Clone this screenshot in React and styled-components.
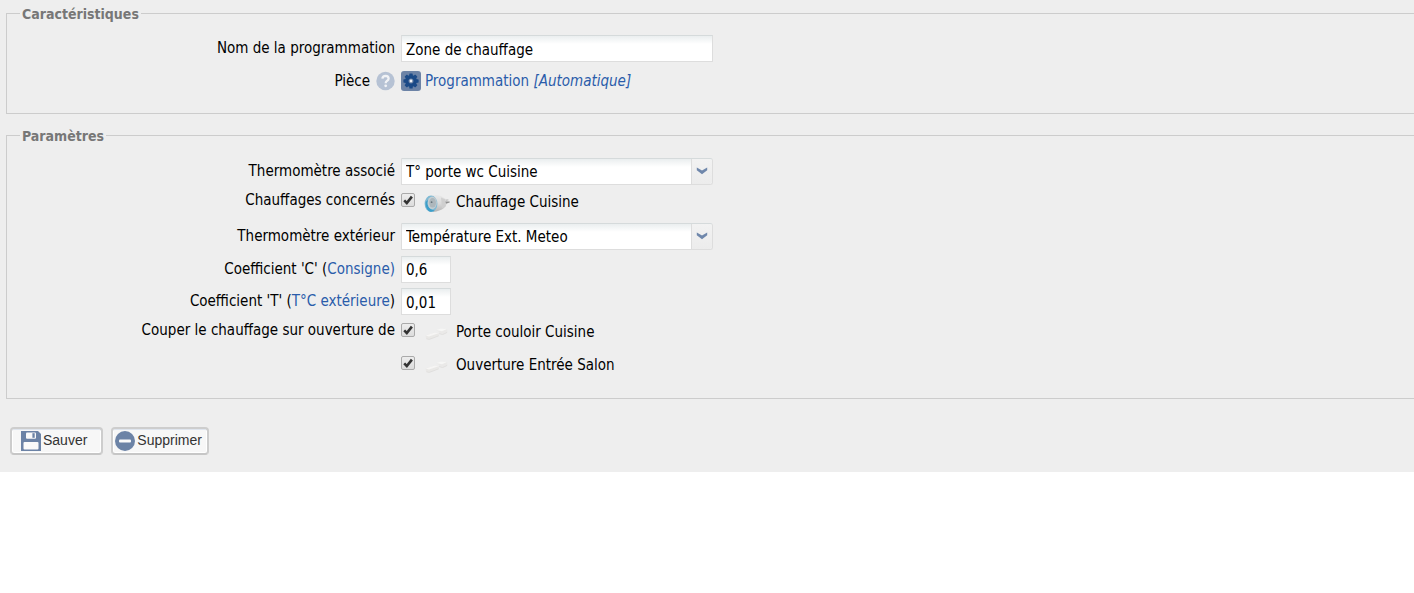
import React from "react";
import styled, { createGlobalStyle } from "styled-components";

const GlobalStyle = createGlobalStyle`
  *, *::before, *::after { box-sizing: border-box; }
  body {
    margin: 0;
    background: #fff;
    color: #000;
    font-family: Tahoma, "DejaVu Sans Condensed", "Noto Sans", sans-serif;
    font-size: 15px;
    line-height: 20px;
  }
`;

const Form = styled.form`
  background: #eee;
  padding: 4px 0 17px 6px;
`;

const Section = styled.fieldset`
  margin: 0 0 12px;
  min-width: 0;
  border: 1px solid #ccc;
  border-right: 0;
  padding: 12px 13px 18px;

  & + & {
    padding-top: 13px;
  }
`;

const Title = styled.legend`
  padding: 2px 2px 0;
  color: #777;
  font-size: 14px;
  line-height: 17px;
  font-weight: bold;
`;

const Row = styled.div`
  display: grid;
  grid-template-columns: 375px minmax(0, 1fr);
  column-gap: 6px;
  align-items: ${(p) => (p.$top ? "start" : "center")};
  min-height: ${(p) => (p.$tall ? 28 : 27)}px;

  & + & {
    margin-top: 5px;
  }
`;

const Caption = styled.div`
  display: flex;
  justify-content: flex-end;
  align-items: center;
  gap: 6px;
  padding-bottom: 1px;
  white-space: pre;
`;

const Link = styled.a`
  color: #2a5caa;
  text-decoration: none;
`;

const TextBox = styled.input`
  display: block;
  width: ${(p) => (p.$small ? 50 : 312)}px;
  max-width: 100%;
  height: 27px;
  padding: 2px 4px 0;
  border: 1px solid #ddd;
  border-top-color: #d5dadb;
  background: linear-gradient(#eaeeef, #fff 8px);
  color: #000;
  font: inherit;
  outline: 0;
`;

const SelectFrame = styled.div`
  position: relative;
  width: 312px;
  max-width: 100%;
`;

const SelectBox = styled.select`
  display: block;
  appearance: none;
  width: 100%;
  height: 27px;
  padding: 0 24px 0 4px;
  border: 1px solid #ddd;
  border-top-color: #d5dadb;
  border-radius: 0 3px 3px 0;
  background: linear-gradient(#eaeeef, #fff 8px);
  color: #000;
  font: inherit;
  outline: 0;
`;

const Arrow = styled.span`
  position: absolute;
  top: 1px;
  right: 1px;
  bottom: 1px;
  width: 21px;
  display: flex;
  justify-content: center;
  padding-top: 8px;
  border-left: 1px solid #ddd;
  border-radius: 0 2px 2px 0;
  background: linear-gradient(#f2f2f2, #ececec);
  pointer-events: none;
`;

const Value = styled.div`
  display: flex;
  align-items: center;
  gap: 4px;
  padding-bottom: 1px;

  svg {
    flex: none;
    margin-top: 1px;
  }
`;

const Option = styled.div`
  display: flex;
  align-items: flex-start;
`;

const Tick = styled.span`
  position: relative;
  width: 14px;
  height: 14px;
  margin: 3px 9px 0 0;

  svg {
    position: absolute;
    inset: 0;
    pointer-events: none;
    visibility: hidden;
  }

  input:checked + svg {
    visibility: visible;
  }
`;

const TickBox = styled.input`
  display: block;
  appearance: none;
  width: 14px;
  height: 14px;
  margin: 0;
  border: 1px solid #aaa;
  border-radius: 2px;
  background: linear-gradient(#ededed, #dcdcdc);
`;

const OptionLabel = styled.label`
  display: flex;
  align-items: center;
  gap: 6px;
  line-height: 24px;

  svg {
    margin-top: 3px;
  }
`;

const Actions = styled.div`
  display: flex;
  gap: 8px;
  padding: 16px 4px 0;
`;

const Button = styled.button`
  display: flex;
  align-items: flex-start;
  gap: 2px;
  height: 28px;
  padding: ${(p) => (p.$wide ? "2px 14px 0 9px" : "2px 5px 0 2px")};
  border: 2px solid #ccc;
  border-color: #cdcdcd #cdcdcd #c6c6c6;
  border-radius: 4px;
  background: #f7f7f7;
  box-shadow: inset 0 2px 0 -1px #dfe5ee, inset 0 0 0 1px #fff;
  color: #333;
  font-family: "Liberation Sans", Arial, sans-serif;
  font-size: 14px;
  line-height: 18px;
`;

const HelpIcon = () => (
  <svg width="19" height="20" viewBox="0 0 19 20" aria-hidden="true">
    <circle cx="9.5" cy="10" r="9.2" fill="#b6c2d4" />
    <path d="M6.4 7.6Q6.6 4.8 9.6 4.8Q12.6 4.9 12.6 7.4Q12.6 8.9 10.9 9.9Q9.7 10.7 9.7 12.2" fill="none" stroke="#f1f3f6" strokeWidth="2.3" />
    <circle cx="9.7" cy="14.8" r="1.4" fill="#f1f3f6" />
  </svg>
);

const GearIcon = () => (
  <svg width="20" height="20" viewBox="0 0 20 20" aria-hidden="true">
    <rect width="20" height="20" rx="3" fill="#6c83a6" />
    <g fill="#1b4a87">
      <circle cx="10" cy="10" r="6" />
      {[0, 45, 90, 135, 180, 225, 270, 315].map((a) => (
        <rect key={a} x="8.3" y="2.4" width="3.4" height="4" rx="0.6" transform={`rotate(${a} 10 10)`} />
      ))}
    </g>
    <circle cx="10" cy="10" r="2.5" fill="#6c83a6" />
    <circle cx="10" cy="10" r="1.4" fill="#f2f4f7" />
  </svg>
);

const PlugIcon = () => (
  <svg width="26" height="20" viewBox="0 0 26 20" aria-hidden="true">
    <defs>
      <linearGradient id="plugBody" x1="0" y1="0" x2="0" y2="1">
        <stop offset="0" stopColor="#e9e9e9" />
        <stop offset="0.5" stopColor="#dadada" />
        <stop offset="1" stopColor="#b4b4b4" />
      </linearGradient>
    </defs>
    <path d="M7 1.6Q12 0.4 17 2L21 4.4L22.4 6V11L20 14Q16 17 9 18Z" fill="url(#plugBody)" />
    <path d="M17 3.6L21.6 5.4V12.4L18 14.6Z" fill="#cfcfcf" />
    <path d="M22 5.4L24.4 5.2V6.6L22 7Z" fill="#c4c4c4" />
    <path d="M21.4 7.6L25.6 7.4V8.6L22 9.8Z" fill="#8f8f8f" />
    <ellipse cx="7" cy="9.8" rx="6.4" ry="8.2" fill="#7fb9d3" />
    <path d="M1.6 8Q1.2 14.4 5 17.2Q8 18.6 10.8 16.4Q6.4 16.2 4.2 12.6Q3.2 9.8 4 6Z" fill="#3d9fca" />
    <ellipse cx="8.2" cy="8.8" rx="4.6" ry="6.4" fill="#c3cdd2" />
    <ellipse cx="8.6" cy="8.8" rx="3.4" ry="4.8" fill="#adb7bc" />
    <circle cx="7.6" cy="8.2" r="0.9" fill="#66737b" />
  </svg>
);

const ContactIcon = () => (
  <svg width="26" height="20" viewBox="0 0 26 20" aria-hidden="true">
    <path d="M1.6 11.6L11 8.6L14.6 9.2L14.8 11.6L5.4 15.4L2.2 14.8Z" fill="#e9e8e6" />
    <path d="M1.6 11.6L11 8.6L14.6 9.2L5 12.6Z" fill="#f6f5f4" />
    <path d="M12 6L16.6 4.4L23 5L23.4 8.2L18.6 10.4L15.4 9.4L15 8Z" fill="#eae9e8" />
    <path d="M12 6L16.6 4.4L23 5L18 7.2Z" fill="#f6f6f5" />
    <path d="M2.4 14.8L5.4 15.4L14.8 11.8M15.2 9.6L18.6 10.6L23.2 8.4" fill="none" stroke="#dddcda" strokeWidth="0.8" />
  </svg>
);

const SaveIcon = () => (
  <svg width="20" height="20" viewBox="0 0 20 20" aria-hidden="true">
    <path d="M0 0H17L20 3V20H0Z" fill="#6c83a6" />
    <rect x="5" y="1.5" width="10" height="6.3" rx="1" fill="#fafafa" />
    <rect x="11.4" y="2.2" width="2.3" height="4.6" fill="#6c83a6" />
    <rect x="2.5" y="11" width="15" height="7.6" rx="1" fill="#fafafa" />
  </svg>
);

const RemoveIcon = () => (
  <svg width="20" height="20" viewBox="0 0 20 20" aria-hidden="true">
    <circle cx="10" cy="10" r="10" fill="#6c83a6" />
    <rect x="4" y="8.6" width="12" height="2.9" rx="1" fill="#fafafa" />
  </svg>
);

function Select({ id, value }) {
  return (
    <SelectFrame>
      <SelectBox id={id} defaultValue={value}>
        <option>{value}</option>
      </SelectBox>
      <Arrow>
        <svg width="12" height="8" viewBox="0 0 12 8" aria-hidden="true">
          <path d="M0.8 0.6L6 3.4L11.2 0.6V3.2L6 7.2L0.8 3.2Z" fill="#6f87ab" />
        </svg>
      </Arrow>
    </SelectFrame>
  );
}

function Choice({ id, icon, children }) {
  return (
    <Option>
      <Tick>
        <TickBox type="checkbox" id={id} defaultChecked />
        <svg width="14" height="14" viewBox="0 0 14 14" aria-hidden="true">
          <path d="M3.2 7.4L5.8 10L10.9 3.6" fill="none" stroke="#333" strokeWidth="2.6" />
        </svg>
      </Tick>
      <OptionLabel htmlFor={id}>
        {icon}
        {children}
      </OptionLabel>
    </Option>
  );
}

export default function App() {
  return (
    <>
      <GlobalStyle />
      <Form onSubmit={(e) => e.preventDefault()}>
        <Section>
          <Title>Caractéristiques</Title>
          <Row>
            <Caption><label htmlFor="nom">Nom de la programmation</label></Caption>
            <TextBox id="nom" defaultValue="Zone de chauffage" />
          </Row>
          <Row $tall>
            <Caption>
              Pièce
              <HelpIcon />
            </Caption>
            <Value>
              <GearIcon />
              <Link href="#piece">Programmation <em>[Automatique]</em></Link>
            </Value>
          </Row>
        </Section>

        <Section>
          <Title>Paramètres</Title>
          <Row>
            <Caption><label htmlFor="thermo">Thermomètre associé</label></Caption>
            <Select id="thermo" value="T° porte wc Cuisine" />
          </Row>
          <Row $top $tall>
            <Caption>Chauffages concernés</Caption>
            <Choice id="chauffage" icon={<PlugIcon />}>Chauffage Cuisine</Choice>
          </Row>
          <Row>
            <Caption><label htmlFor="exterieur">Thermomètre extérieur</label></Caption>
            <Select id="exterieur" value="Température Ext. Meteo" />
          </Row>
          <Row $tall>
            <Caption>
              <label htmlFor="coefC">Coefficient 'C' (<Link href="#consigne">Consigne)</Link></label>
            </Caption>
            <TextBox $small id="coefC" defaultValue="0,6" />
          </Row>
          <Row>
            <Caption>
              <label htmlFor="coefT">Coefficient 'T' (<Link href="#exterieure">T°C extérieure</Link>)</label>
            </Caption>
            <TextBox $small id="coefT" defaultValue="0,01" />
          </Row>
          <Row $top $tall>
            <Caption>Couper le chauffage sur ouverture de</Caption>
            <Choice id="porte" icon={<ContactIcon />}>Porte couloir Cuisine</Choice>
          </Row>
          <Row $top>
            <Caption />
            <Choice id="entree" icon={<ContactIcon />}>Ouverture Entrée Salon</Choice>
          </Row>
        </Section>

        <Actions>
          <Button type="submit" $wide><SaveIcon />Sauver</Button>
          <Button type="button"><RemoveIcon />Supprimer</Button>
        </Actions>
      </Form>
    </>
  );
}
